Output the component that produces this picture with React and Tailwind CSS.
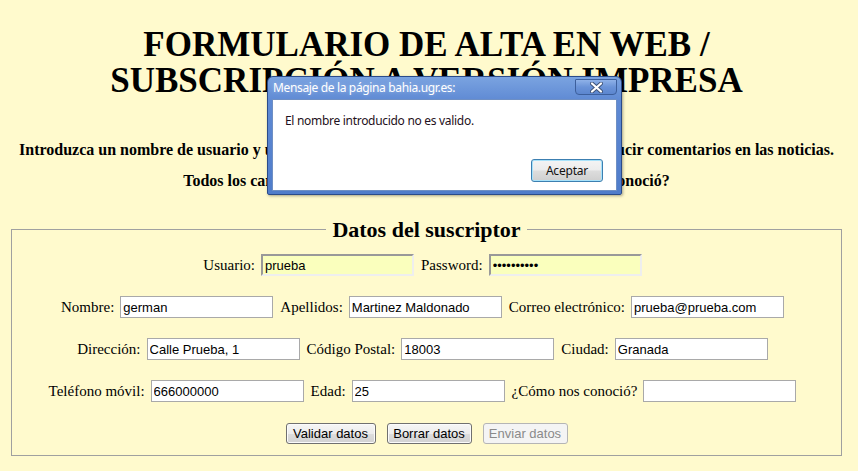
import React from "react";

const serif = "[font-family:'Liberation_Serif','Times_New_Roman',serif]";
const sans = "[font-family:'Liberation_Sans',Arial,sans-serif]";
const ui = "[font-family:'Noto_Sans','Open_Sans',sans-serif]";

function Field({ label, value = "", first = false, auto = false }) {
  return (
    <div className={`flex items-center ${first ? "" : "ml-[7px]"}`}>
      <span className="text-[15px] leading-[18px]">{label}</span>
      <input
        readOnly
        value={value}
        className={`ml-[6px] h-[22px] w-[153px] px-[2px] text-[13px] text-black outline-none ${sans} ${
          auto
            ? "border-2 border-t-[#999999] border-l-[#999999] border-r-[#eeeeee] border-b-[#eeeeee] bg-[#faffbd]"
            : "border border-[#a9a9a9] bg-white"
        }`}
      />
    </div>
  );
}

function Row({ children }) {
  return <div className="flex h-[22px] items-center justify-center pr-[8px]">{children}</div>;
}

function FormButton({ children, disabled = false, width }) {
  return (
    <button
      disabled={disabled}
      className={`h-[21px] ${width} rounded-[3px] border text-[13px] leading-[17px] ${sans} ${
        disabled
          ? "border-[#b5b5b5] bg-[#f4f4f4] text-[#8a8a8a]"
          : "border-[#707070] bg-[linear-gradient(#f6f6f6_0%,#ececec_50%,#dddddd_51%,#d2d2d2_100%)] text-black [box-shadow:inset_0_0_0_1px_#fbfbfb]"
      }`}
    >
      {children}
    </button>
  );
}

function CloseGlyph() {
  return (
    <svg width="13" height="11" viewBox="0 0 13 11">
      <path d="M2 1.5 L11 9.5 M11 1.5 L2 9.5" stroke="#3d5175" strokeWidth="4" strokeLinecap="round" />
      <path d="M2 1.5 L11 9.5 M11 1.5 L2 9.5" stroke="#ffffff" strokeWidth="2.2" strokeLinecap="round" />
    </svg>
  );
}

export default function App() {
  return (
    <div className={`relative min-h-[471px] w-full overflow-hidden bg-[#fffacd] text-black ${serif}`}>
      <div className="pl-[8px] pr-[13px]">
        <h1 className="pt-[27px] text-center text-[35px] font-bold leading-[36px]">
          FORMULARIO DE ALTA EN WEB /
          <br />
          SUBSCRIPCIÓN A VERSIÓN IMPRESA
        </h1>
        <p className="mt-[42px] text-center text-[16px] font-bold leading-[18px]">
          Introduzca un nombre de usuario y una contraseña. Éstos le servirán para poder introducir comentarios en las noticias.
        </p>
        <p className="mt-[13px] text-center text-[16px] font-bold leading-[18px]">
          Todos los campos son obligatorios menos el campo ¿Cómo nos conoció?
        </p>

        <div className="mx-[3px] mt-[27px]">
          <div className="flex">
            <div className="mt-[12px] flex-1 border-l border-t border-[#a0a0a0]"></div>
            <span className="px-[6px] text-[22px] font-bold leading-[26px]">Datos del suscriptor</span>
            <div className="mt-[12px] flex-1 border-r border-t border-[#a0a0a0]"></div>
          </div>
          <div className="flex flex-col gap-[20px] border-b border-l border-r border-[#a0a0a0] pb-[11px] pt-[11px]">
            <Row>
              <Field first label="Usuario:" value="prueba" auto />
              <Field label="Password:" value="••••••••••" auto />
            </Row>
            <Row>
              <Field first label="Nombre:" value="german" />
              <Field label="Apellidos:" value="Martinez Maldonado" />
              <Field label="Correo electrónico:" value="prueba@prueba.com" />
            </Row>
            <Row>
              <Field first label="Dirección:" value="Calle Prueba, 1" />
              <Field label="Código Postal:" value="18003" />
              <Field label="Ciudad:" value="Granada" />
            </Row>
            <Row>
              <Field first label="Teléfono móvil:" value="666000000" />
              <Field label="Edad:" value="25" />
              <Field label="¿Cómo nos conoció?" value="" />
            </Row>
            <div className="flex h-[22px] items-center justify-center gap-[11px]">
              <FormButton width="w-[90px]">Validar datos</FormButton>
              <FormButton width="w-[85px]">Borrar datos</FormButton>
              <FormButton width="w-[85px]" disabled>Enviar datos</FormButton>
            </div>
          </div>
        </div>
      </div>

      {/* Alert dialog */}
      <div className="absolute left-[267px] top-[76px] flex h-[119px] w-[355px] flex-col rounded-t-[6px] rounded-b-[2px] border border-[#2a4b8a] bg-[linear-gradient(#7aa3e0_0%,#5f8ad4_20%,#4f7cca_100%)] px-[4px] pb-[3px] [box-shadow:1px_1px_3px_rgba(0,0,0,0.35)]">
        <div className="flex h-[22px] items-start justify-between">
          <span className={`mt-[3px] pl-[1px] text-[12px] leading-[16px] tracking-[-0.35px] text-white ${ui} [text-shadow:0_0_4px_rgba(255,255,255,0.35)]`}>
            Mensaje de la página bahia.ugr.es:
          </span>
          <div className="mt-[2px] flex h-[16px] w-[42px] items-center justify-center rounded-b-[4px] rounded-t-[1px] border border-[#3c5f9c] bg-[linear-gradient(#8fb2e8_0%,#6a93d8_50%,#5c86cf_100%)]">
            <CloseGlyph />
          </div>
        </div>
        <div className={`flex flex-1 flex-col border border-[#6e8fc4] bg-white ${ui}`}>
          <div className="pl-[12px] pt-[13px] text-[12px] leading-[16px] tracking-[-0.3px] text-[#1e1020]">
            El nombre introducido no es valido.
          </div>
          <div className="flex-1"></div>
          <div className="flex justify-end pb-[8px] pr-[13px]">
            <button className="flex h-[23px] w-[72px] items-center justify-center rounded-[3px] border border-[#3c7fb1] bg-[linear-gradient(#f4f4f4_0%,#ececec_48%,#dddddd_52%,#cfcfcf_100%)] text-[12px] tracking-[-0.2px] text-[#111] [box-shadow:inset_0_0_0_1px_#a8e2fa]">
              Aceptar
            </button>
          </div>
        </div>
      </div>
    </div>
  );
}
